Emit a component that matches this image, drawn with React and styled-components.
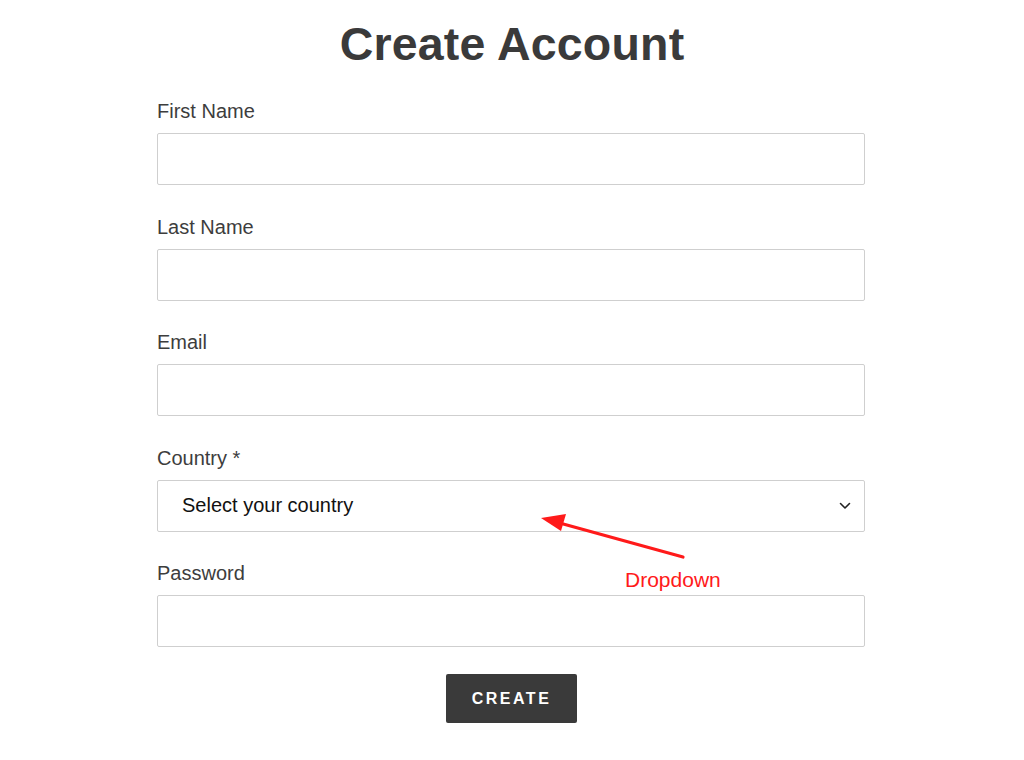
import React from 'react'
import styled, { createGlobalStyle } from 'styled-components'

const GlobalStyle = createGlobalStyle`
    body {
        margin: 0;
        background: #ffffff;
        font-family: "Liberation Sans", Arial, sans-serif;
    }
`

const fields = [
    { label: 'First Name' },
    { label: 'Last Name' },
    { label: 'Email' },
    { label: 'Country *', select: true },
    { label: 'Password' },
]

function App() {
    return (
        <Page>
            <GlobalStyle />
            <Title>Create Account</Title>
            <Form>
                {fields.map(f => (
                    <Field key={f.label}>
                        <Label>{f.label}</Label>
                        {f.select ? (
                            <SelectBox>
                                <span>Select your country</span>
                                <svg width="12" height="8" viewBox="0 0 12 8">
                                    <path d="M1.5 1.5 L6 6 L10.5 1.5" fill="none" stroke="#222" strokeWidth="1.6" strokeLinecap="round" strokeLinejoin="round" />
                                </svg>
                            </SelectBox>
                        ) : (
                            <Input />
                        )}
                    </Field>
                ))}
                <Actions>
                    <Button>CREATE</Button>
                </Actions>
            </Form>
            <Annotation>
                <svg width="1024" height="760" viewBox="0 0 1024 760">
                    <line x1="683" y1="557" x2="556" y2="522" stroke="#ff1a1a" strokeWidth="3.2" strokeLinecap="round" />
                    <polygon points="541,518 566,514 561,531" fill="#ff1a1a" />
                </svg>
                <Note>Dropdown</Note>
            </Annotation>
        </Page>
    )
}

export default App

const Page = styled.div`
    position: relative;
    width: 1024px;
    height: 760px;
    display: flex;
    flex-direction: column;
    align-items: center;
    padding-top: 16px;
    box-sizing: border-box;
    color: #3a3a3a;
`

const Title = styled.h1`
    margin: 0;
    font-size: 46.5px;
    line-height: 56px;
    font-weight: 700;
    color: #3a3a3a;
    letter-spacing: 0.2px;
`

const Form = styled.div`
    width: 708px;
    margin: 27px 2px 0 0;
    display: flex;
    flex-direction: column;
    gap: 29.5px;
`

const Field = styled.div`
    display: flex;
    flex-direction: column;
    gap: 10px;
`

const Label = styled.div`
    font-size: 20px;
    line-height: 24px;
    color: #3d3d3d;
`

const Input = styled.div`
    height: 52px;
    box-sizing: border-box;
    border: 1px solid #cfcfcf;
    border-radius: 2px;
    background: #fff;
`

const SelectBox = styled(Input)`
    display: flex;
    align-items: center;
    justify-content: space-between;
    padding: 0 13px 0 24px;
    font-size: 20px;
    color: #111;
`

const Actions = styled.div`
    display: flex;
    justify-content: center;
    margin-top: -2.5px;
`

const Button = styled.div`
    width: 131px;
    height: 49px;
    border-radius: 2px;
    background: #3a3a3a;
    color: #fff;
    display: flex;
    align-items: center;
    justify-content: center;
    font-size: 16px;
    font-weight: 700;
    letter-spacing: 2.5px;
    padding-left: 1px;
    box-sizing: border-box;
`

const Annotation = styled.div`
    position: absolute;
    inset: 0;
    pointer-events: none;
    svg { position: absolute; left: 0; top: 0; }
`

const Note = styled.div`
    position: absolute;
    left: 625px;
    top: 567px;
    font-size: 21px;
    line-height: 26px;
    color: #ff1a1a;
`
